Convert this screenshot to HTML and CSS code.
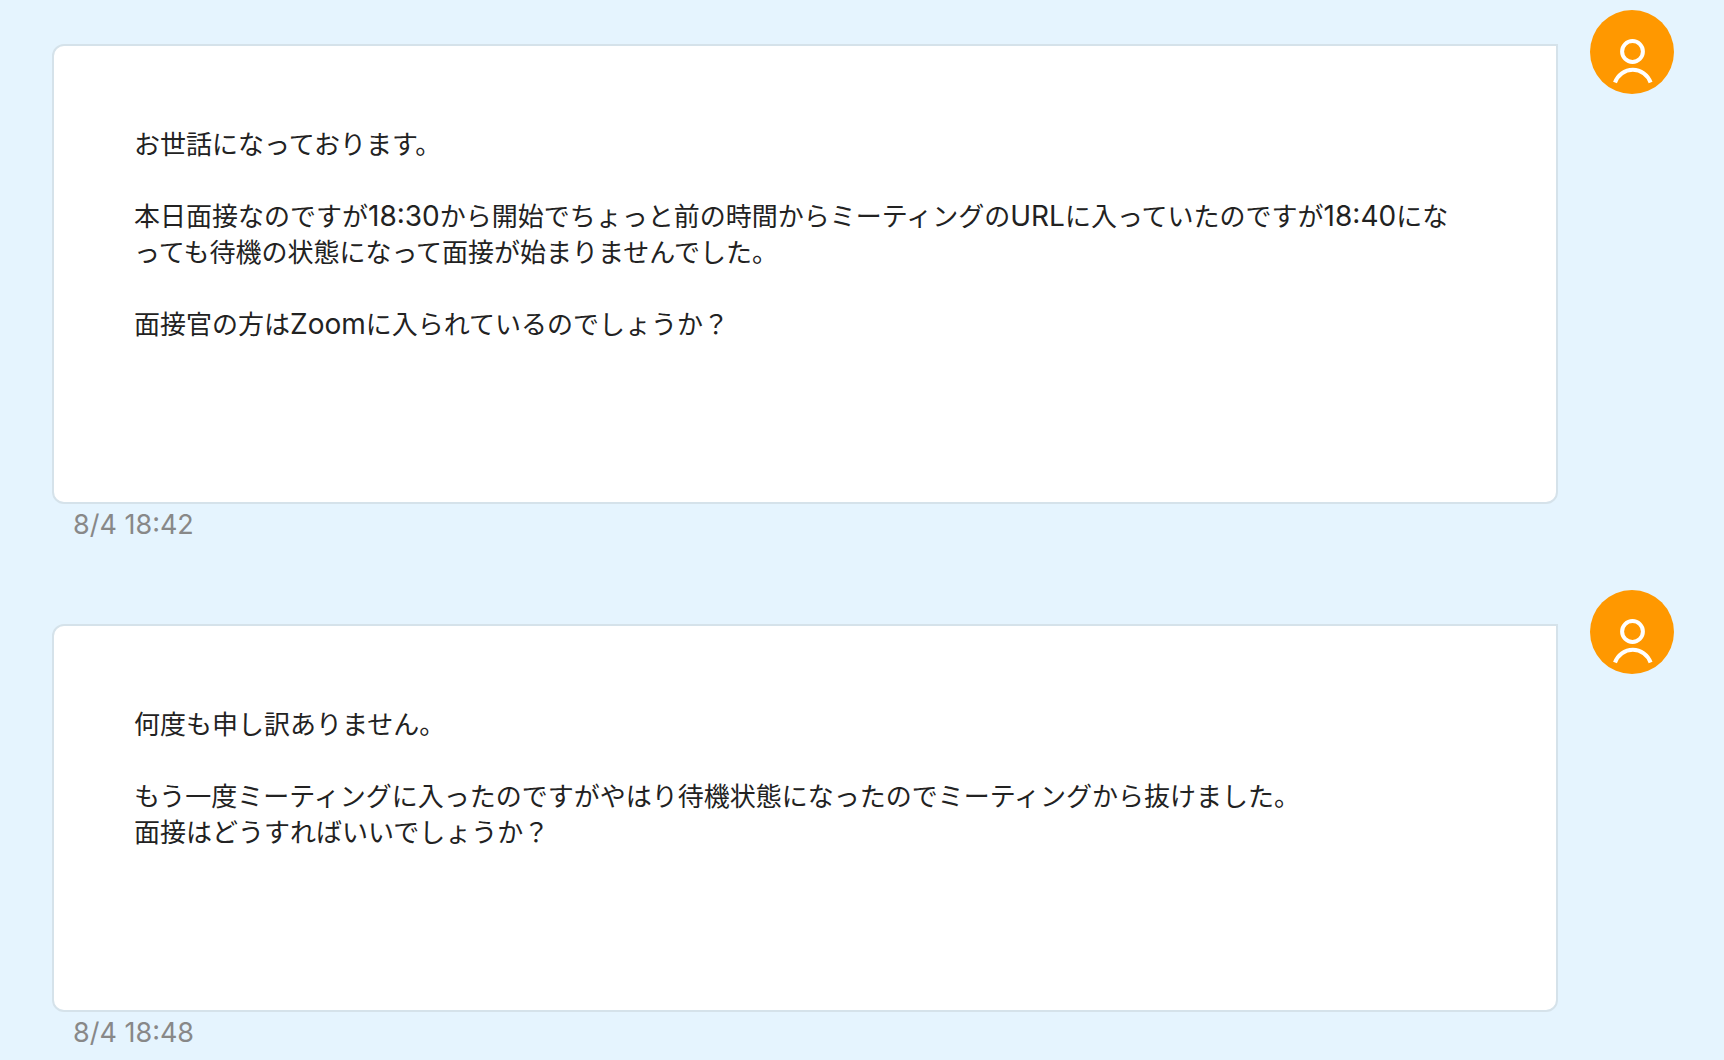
FILE: index.html
```html
<!DOCTYPE html>
<html lang="ja">
<head>
<meta charset="utf-8">
<meta name="viewport" content="width=device-width, initial-scale=1">
<title>メッセージ</title>
<link rel="stylesheet" href="styles.css">
</head>
<body>
<main class="thread">
  <article class="message">
    <div class="content">
      <div class="bubble">
        <p>お世話になっております。</p>
        <p>本日面接なのですが<span class="latin">18:30</span>から開始でちょっと前の時間からミーティングの<span class="latin">URL</span>に入っていたのですが<span class="latin">18:40</span>になっても待機の状態になって面接が始まりませんでした。</p>
        <p>面接官の方は<span class="latin">Zoom</span>に入られているのでしょうか？</p>
      </div>
      <time class="time" datetime="08-04T18:42">8/4 18:42</time>
    </div>
    <div class="avatar">
      <svg class="avatar-icon" viewBox="0 0 84 84" aria-hidden="true"><circle cx="42.5" cy="41.5" r="10.4"/><path d="M25 72.5a18.8 18.8 0 0 1 35.6 0"/></svg>
    </div>
  </article>
  <article class="message">
    <div class="content">
      <div class="bubble">
        <p>何度も申し訳ありません。</p>
        <p>もう一度ミーティングに入ったのですがやはり待機状態になったのでミーティングから抜けました。<br>面接はどうすればいいでしょうか？</p>
      </div>
      <time class="time" datetime="08-04T18:48">8/4 18:48</time>
    </div>
    <div class="avatar">
      <svg class="avatar-icon" viewBox="0 0 84 84" aria-hidden="true"><circle cx="42.5" cy="41.5" r="10.4"/><path d="M25 72.5a18.8 18.8 0 0 1 35.6 0"/></svg>
    </div>
  </article>
</main>
</body>
</html>
```

FILE: styles.css
```css
* {
  box-sizing: border-box;
}

body {
  margin: 0;
  background: #e5f4fe;
  color: #222;
  font-family: Inter, "Noto Sans CJK JP", sans-serif;
  font-size: 26px;
  line-height: 36px;
}

.thread {
  display: flex;
  flex-direction: column;
  gap: 47px;
  padding: 10px 50px 0 52px;
}

.message {
  display: flex;
  align-items: flex-start;
  gap: 32px;
}

.content {
  flex: 1;
  min-width: 0;
  padding-top: 34px;
}

.bubble {
  padding: 81px 92px 159px 80px;
  background: #fff;
  border: 2px solid #d5e2ea;
  border-radius: 12px 0 12px 12px;
}

.bubble p {
  margin: 0 0 36px;
}

.bubble p:last-child {
  margin-bottom: 0;
}

/* Latin letters and digits run slightly larger than the kana */
.latin {
  font-size: 28px;
  line-height: 1;
}

.time {
  display: block;
  padding: 3px 21px 0;
  color: #888;
  font-size: 27px;
}

.avatar {
  flex: none;
  width: 84px;
  height: 84px;
  border-radius: 50%;
  background: #ff9800;
}

.avatar-icon {
  display: block;
  fill: none;
  stroke: #fff;
  stroke-width: 4;
  stroke-linecap: butt;
}
```
